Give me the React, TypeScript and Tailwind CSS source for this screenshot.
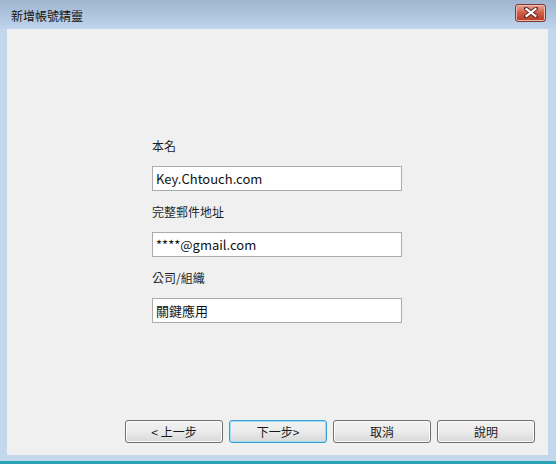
import React from "react";

const font = { fontFamily: '"Noto Sans CJK TC", "Noto Sans", sans-serif' };

function Btn({ label, primary }: { label: string; primary?: boolean }) {
  return (
    <div
      className={
        "w-[98px] h-[23px] flex items-center justify-center rounded-[3px] text-[12px] text-[#1a1a1a] bg-gradient-to-b from-[#f2f2f2] via-[#ebebeb] to-[#d8d8d8] " +
        (primary
          ? "border border-[#3c9ccf] shadow-[inset_0_0_0_1px_#9fdcf5]"
          : "border border-[#707070] shadow-[inset_0_0_0_1px_#fbfbfb]")
      }
    >
      {label}
    </div>
  );
}

function Field({ label, value, first }: { label: string; value: string; first?: boolean }) {
  return (
    <div className={"flex flex-col " + (first ? "" : "mt-[13px]")}>
      <div className="h-[16px] leading-[16px] text-[12px] text-[#1e1e1e]">{label}</div>
      <div className="mt-[12px] w-[250px] h-[25px] bg-white border border-[#ababab] flex items-center pl-[3px] text-[13px] text-[#111]">
        {value}
      </div>
    </div>
  );
}

export default function App() {
  return (
    <div className="w-[556px] h-[464px] flex flex-col bg-[#c3d7ed] overflow-hidden" style={font}>
      <div className="h-[29px] flex items-center justify-between bg-gradient-to-b from-[#9fb5cf] to-[#bfd5ee] pl-[11px] pr-[10px] shrink-0">
        <div className="text-[12px] text-[#111] mt-[2px]">新增帳號精靈</div>
        <div className="w-[31px] h-[18px] -mt-[4px] rounded-[3px] border border-[#7a3a33] bg-gradient-to-b from-[#e8a597] via-[#cf5b44] to-[#b7391f] flex items-center justify-center shadow-[inset_0_0_0_1px_#f0b9ab]">
          <svg width="14" height="11" viewBox="0 0 14 11">
            <path d="M2 1.5 L12 9.5 M12 1.5 L2 9.5" stroke="#5a2a24" strokeWidth="4" strokeLinecap="square" />
            <path d="M2.5 2 L11.5 9 M11.5 2 L2.5 9" stroke="#ffffff" strokeWidth="2.2" strokeLinecap="square" />
          </svg>
        </div>
      </div>
      <div className="flex ml-[7px] mr-[8px] h-[426px] bg-[#f0f0f0] flex-col shrink-0">
        <div className="pl-[145px] pt-[109px] flex flex-col">
          <Field label="本名" value="Key.Chtouch.com" first />
          <Field label="完整郵件地址" value="****@gmail.com" />
          <Field label="公司/組織" value="關鍵應用" />
        </div>
        <div className="mt-auto mb-[12px] mr-[13px] flex justify-end gap-[6px]">
          <Btn label="< 上一步" />
          <Btn label="下一步>" primary />
          <Btn label="取消" />
          <Btn label="說明" />
        </div>
      </div>
      <div className="h-[6px] shrink-0" />
      <div className="h-[3px] bg-[#2ba3b5] shrink-0" />
    </div>
  );
}
